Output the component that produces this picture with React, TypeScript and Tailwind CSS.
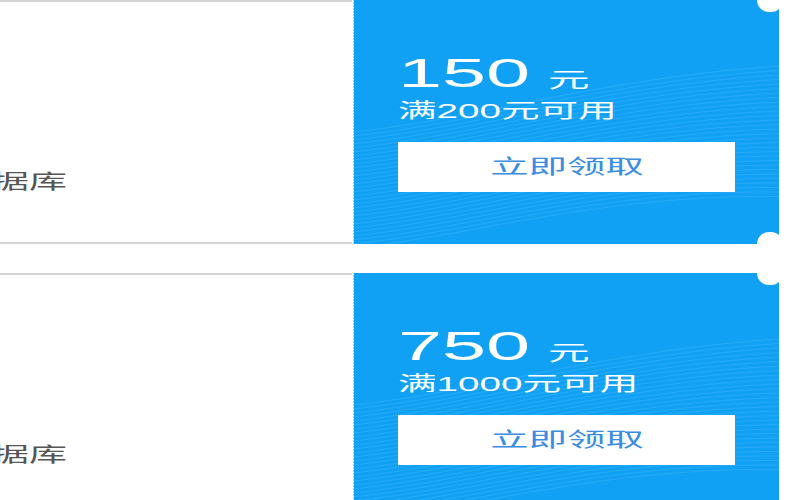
const coupons = [
  { amount: 150, limit: 200 },
  { amount: 750, limit: 1000 },
];

const font = "font-['Liberation_Sans','Noto_Sans_CJK_SC',sans-serif]";

function Waves() {
  const lines = Array.from({ length: 30 }, (_, i) => i);
  return (
    <svg
      className="pointer-events-none absolute inset-0 h-full w-full"
      viewBox="0 0 427 244"
      preserveAspectRatio="none"
    >
      {lines.map((i) => (
        <path
          key={i}
          d={`M0 ${132 + i * 4} C 120 ${120 + i * 4}, 250 ${78 + i * 4}, 427 ${66 + i * 4.5}`}
          fill="none"
          stroke="#fff"
          strokeOpacity={0.1}
          strokeWidth={1}
        />
      ))}
    </svg>
  );
}

function Coupon({ amount, limit }: { amount: number; limit: number }) {
  return (
    <div className="relative flex h-[244px] shrink-0">
      {/* 왼쪽 설명 영역 (잘려서 일부만 보임) */}
      <div className="w-[352px] overflow-hidden border-y-2 border-[#d4d4d4] pt-[170px]">
        <div className="ml-[-47px] w-max origin-left scale-x-[1.9] text-[20px] leading-none text-[#555]">
          数据库
        </div>
      </div>

      <div className="relative w-[427px] overflow-hidden bg-[#10a1f5] pl-[46px] pr-[44px] pt-[53px]">
        <div className="absolute inset-y-0 left-0 w-[4px] bg-[radial-gradient(circle_at_0_50%,#fff_1.6px,transparent_2px)] bg-[length:4px_3px]" />
        <Waves />
        <div className="relative">
          <div className="w-max origin-left scale-x-[1.98] whitespace-nowrap text-[40px] leading-none text-white">
            <span>{amount}</span>
            <span className="ml-[9px] text-[21px]">元</span>
          </div>
          <div className="mt-[8px] w-max origin-left scale-x-[1.93] whitespace-nowrap text-[20px] leading-none text-white">
            满{limit}元可用
          </div>
          <button className="mt-[21px] flex h-[50px] w-full items-center justify-center bg-white">
            <span className="inline-block scale-x-[1.92] text-[20px] leading-none text-[#3a8de0]">
              立即领取
            </span>
          </button>
        </div>
      </div>

      <div className="w-[21px]" />

      {/* 상하단 반원 홈 */}
      <div className="absolute left-[757px] top-[-12px] h-[24px] w-[26px] rounded-full bg-white" />
      <div className="absolute bottom-[-12px] left-[757px] h-[24px] w-[26px] rounded-full bg-white" />
    </div>
  );
}

export default function App() {
  return (
    <div className={`flex h-[500px] w-[800px] flex-col gap-[29px] overflow-hidden bg-white ${font}`}>
      {coupons.map((c) => (
        <Coupon key={c.amount} amount={c.amount} limit={c.limit} />
      ))}
    </div>
  );
}
